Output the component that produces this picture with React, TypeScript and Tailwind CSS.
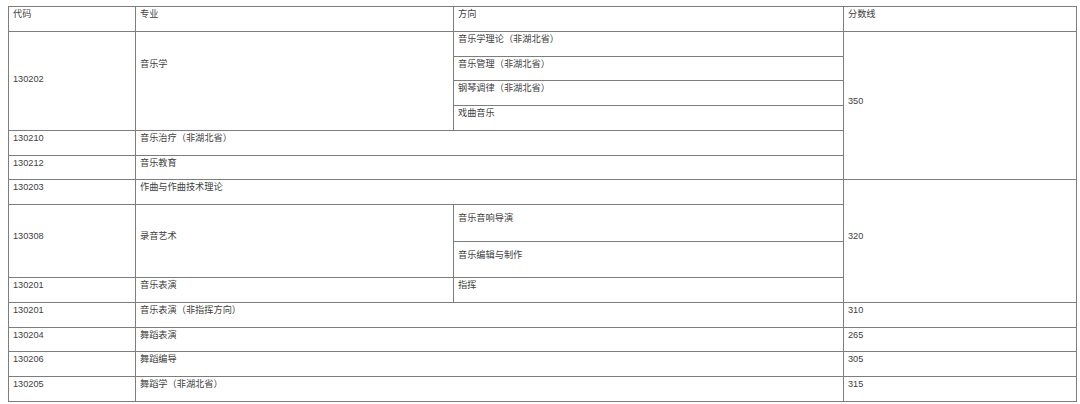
import React from "react";

const cell =
  "flex items-center pl-[4px] pb-[10px] border-r border-b border-[#7d7d7d] text-[9.2px] leading-[14px] text-[#404040] whitespace-nowrap overflow-hidden";

export default function App() {
  return (
    <div
      className="w-[1080px] h-[404px] bg-white pt-[6px] pl-[8px] overflow-hidden"
      style={{ fontFamily: '"Liberation Sans", "Noto Sans CJK SC", sans-serif' }}
    >
      <div className="grid w-[1069px] grid-cols-[127px_318px_390px_233px] grid-rows-[25px_25px_24px_25px_25px_25px_24px_25px_37px_36px_25px_25px_24px_25px_25px] border-l border-t border-[#7d7d7d]">
        {/* header */}
        <div className={cell}>代码</div>
        <div className={cell}>专业</div>
        <div className={cell}>方向</div>
        <div className={cell}>分数线</div>

        {/* 130202 */}
        <div className={`${cell} row-span-4 !pb-[5px]`}>130202</div>
        <div className={`${cell} row-span-4 !pb-[34px]`}>音乐学</div>
        <div className={cell}>音乐学理论（非湖北省）</div>
        <div className={`${cell} row-span-6`}>350</div>
        <div className={cell}>音乐管理（非湖北省）</div>
        <div className={cell}>钢琴调律（非湖北省）</div>
        <div className={cell}>戏曲音乐</div>

        <div className={cell}>130210</div>
        <div className={`${cell} col-span-2`}>音乐治疗（非湖北省）</div>

        <div className={cell}>130212</div>
        <div className={`${cell} col-span-2`}>音乐教育</div>

        <div className={cell}>130203</div>
        <div className={`${cell} col-span-2`}>作曲与作曲技术理论</div>
        <div className={`${cell} row-span-4`}>320</div>

        <div className={`${cell} row-span-2`}>130308</div>
        <div className={`${cell} row-span-2`}>录音艺术</div>
        <div className={cell}>音乐音响导演</div>
        <div className={cell}>音乐编辑与制作</div>

        <div className={cell}>130201</div>
        <div className={cell}>音乐表演</div>
        <div className={cell}>指挥</div>

        <div className={cell}>130201</div>
        <div className={`${cell} col-span-2`}>音乐表演（非指挥方向）</div>
        <div className={cell}>310</div>

        <div className={cell}>130204</div>
        <div className={`${cell} col-span-2`}>舞蹈表演</div>
        <div className={cell}>265</div>

        <div className={cell}>130206</div>
        <div className={`${cell} col-span-2`}>舞蹈编导</div>
        <div className={cell}>305</div>

        <div className={cell}>130205</div>
        <div className={`${cell} col-span-2`}>舞蹈学（非湖北省）</div>
        <div className={cell}>315</div>
      </div>
    </div>
  );
}
